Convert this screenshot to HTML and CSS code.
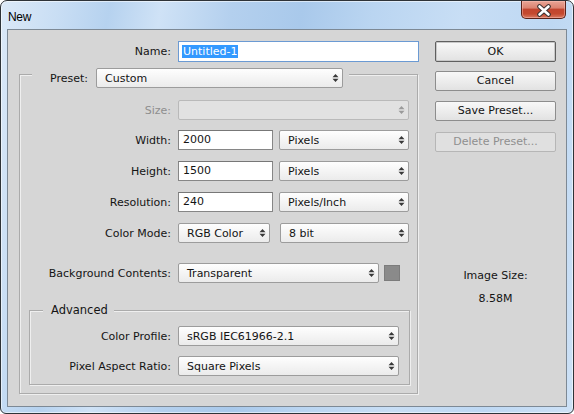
FILE: index.html
```html
<!DOCTYPE html>
<html>
<head>
<meta charset="utf-8">
<title>New</title>
<link rel="stylesheet" href="styles.css">
</head>
<body>
<div class="window">
  <div class="titlebar">
    <span class="title">New</span>
    <div class="close">
      <svg width="16" height="13" viewBox="0 0 16 13">
        <path d="M3.5 2.5 L12.5 10.5 M12.5 2.5 L3.5 10.5" stroke="#3a3030" stroke-width="4.6" stroke-linecap="round"/>
        <path d="M3.5 2.5 L12.5 10.5 M12.5 2.5 L3.5 10.5" stroke="#ffffff" stroke-width="2.6" stroke-linecap="round"/>
      </svg>
    </div>
  </div>
  <div class="client">
    <div class="main">
      <div class="row name-row">
        <label class="lbl lbl-name">Name:</label>
        <div class="input input-name"><span class="sel">Untitled-1</span></div>
      </div>

      <div class="group">
        <div class="legend preset-legend">
          <label class="lbl-preset">Preset:</label>
          <div class="select w-preset"><span class="val">Custom</span><svg class="arr" width="7" height="10" viewBox="0 0 7 10"><path d="M3.5 1 L6.5 4.2 H0.5Z M0.5 5.8 H6.5 L3.5 9Z"/></svg></div>
        </div>

        <div class="row r-size">
          <label class="lbl lbl-g disabled">Size:</label>
          <div class="select w-full disabled-sel"><span class="val"></span><svg class="arr" width="7" height="10" viewBox="0 0 7 10"><path d="M3.5 1 L6.5 4.2 H0.5Z M0.5 5.8 H6.5 L3.5 9Z"/></svg></div>
        </div>

        <div class="row r-width">
          <label class="lbl lbl-g">Width:</label>
          <div class="input w-num">2000</div>
          <div class="select w-unit"><span class="val">Pixels</span><svg class="arr" width="7" height="10" viewBox="0 0 7 10"><path d="M3.5 1 L6.5 4.2 H0.5Z M0.5 5.8 H6.5 L3.5 9Z"/></svg></div>
        </div>

        <div class="row r-next">
          <label class="lbl lbl-g">Height:</label>
          <div class="input w-num">1500</div>
          <div class="select w-unit"><span class="val">Pixels</span><svg class="arr" width="7" height="10" viewBox="0 0 7 10"><path d="M3.5 1 L6.5 4.2 H0.5Z M0.5 5.8 H6.5 L3.5 9Z"/></svg></div>
        </div>

        <div class="row r-next">
          <label class="lbl lbl-g">Resolution:</label>
          <div class="input w-num">240</div>
          <div class="select w-unit"><span class="val">Pixels/Inch</span><svg class="arr" width="7" height="10" viewBox="0 0 7 10"><path d="M3.5 1 L6.5 4.2 H0.5Z M0.5 5.8 H6.5 L3.5 9Z"/></svg></div>
        </div>

        <div class="row r-next">
          <label class="lbl lbl-g">Color Mode:</label>
          <div class="select w-mode"><span class="val">RGB Color</span><svg class="arr" width="7" height="10" viewBox="0 0 7 10"><path d="M3.5 1 L6.5 4.2 H0.5Z M0.5 5.8 H6.5 L3.5 9Z"/></svg></div>
          <div class="select w-bit"><span class="val">8 bit</span><svg class="arr" width="7" height="10" viewBox="0 0 7 10"><path d="M3.5 1 L6.5 4.2 H0.5Z M0.5 5.8 H6.5 L3.5 9Z"/></svg></div>
        </div>

        <div class="row r-bg">
          <label class="lbl lbl-g">Background Contents:</label>
          <div class="select w-bg"><span class="val">Transparent</span><svg class="arr" width="7" height="10" viewBox="0 0 7 10"><path d="M3.5 1 L6.5 4.2 H0.5Z M0.5 5.8 H6.5 L3.5 9Z"/></svg></div>
          <div class="swatch"></div>
        </div>

        <div class="group adv">
          <div class="legend adv-legend">Advanced</div>
          <div class="row r-prof">
            <label class="lbl lbl-a">Color Profile:</label>
            <div class="select w-adv"><span class="val">sRGB IEC61966-2.1</span><svg class="arr" width="7" height="10" viewBox="0 0 7 10"><path d="M3.5 1 L6.5 4.2 H0.5Z M0.5 5.8 H6.5 L3.5 9Z"/></svg></div>
          </div>
          <div class="row r-par">
            <label class="lbl lbl-a">Pixel Aspect Ratio:</label>
            <div class="select w-adv"><span class="val">Square Pixels</span><svg class="arr" width="7" height="10" viewBox="0 0 7 10"><path d="M3.5 1 L6.5 4.2 H0.5Z M0.5 5.8 H6.5 L3.5 9Z"/></svg></div>
          </div>
        </div>
      </div>
    </div>

    <div class="side">
      <div class="btn btn-ok">OK</div>
      <div class="btn btn-cancel">Cancel</div>
      <div class="btn btn-save">Save Preset...</div>
      <div class="btn btn-del disabled-btn">Delete Preset...</div>
      <div class="imgsize-label">Image Size:</div>
      <div class="imgsize-val">8.58M</div>
    </div>
  </div>
</div>
</body>
</html>
```

FILE: styles.css
```css
* { box-sizing: border-box; }

html, body {
  margin: 0;
  padding: 0;
  background: #ffffff;
}

body {
  width: 574px;
  height: 414px;
  overflow: hidden;
  font-family: "DejaVu Sans", sans-serif;
  font-size: 11px;
  color: #141414;
}

.window {
  width: 574px;
  height: 414px;
  border: 1px solid #2e3338;
  border-radius: 7px 7px 6px 6px;
  padding: 0 6px 6px 6px;
  display: flex;
  flex-direction: column;
  background: linear-gradient(100deg, #dbe9f8 0%, #c9def4 9%, #b6d2ef 17%, #cfe2f6 25%, #b4d0ee 36%, #a9c9eb 47%, #bad5f1 58%, #c8def5 72%, #bed8f3 86%, #cde1f6 100%);
  box-shadow: inset 0 0 0 1px rgba(255, 255, 255, 0.55);
}

.titlebar {
  height: 28px;
  display: flex;
  justify-content: space-between;
  align-items: flex-start;
  padding-left: 1px;
}

.title {
  font-family: "Liberation Sans", sans-serif;
  font-size: 12px;
  color: #000;
  margin-top: 9px;
  letter-spacing: -0.3px;
}

.close {
  width: 45px;
  height: 18px;
  margin-right: 1px;
  border: 1px solid #5a2219;
  border-top: none;
  border-radius: 0 0 5px 5px;
  background: linear-gradient(#e9a596 0%, #dc8472 40%, #c2452f 50%, #c4492f 75%, #d97a62 100%);
  box-shadow: inset 0 0 0 1px rgba(255, 200, 190, 0.45);
  display: flex;
  align-items: center;
  justify-content: center;
}

.close svg { display: block; margin-top: 1px; }

.client {
  flex: 1;
  background: #d6d6d6;
  border: 1px solid #7d8995;
  display: flex;
}

.main {
  width: 419px;
  display: flex;
  flex-direction: column;
}

.row {
  display: flex;
  align-items: center;
  height: 20px;
}

.lbl {
  text-align: right;
  flex: none;
  white-space: nowrap;
}

.name-row {
  margin-top: 11px;
  height: 21px;
}

.lbl-name { width: 163px; margin-right: 7px; }

.input {
  height: 20px;
  background: #ffffff;
  border: 1px solid #868686;
  border-top-color: #777;
  padding-left: 4px;
  line-height: 18px;
  white-space: nowrap;
}

.input-name {
  width: 241px;
  height: 21px;
  border-color: #6b9ad3;
  padding-left: 3px;
  line-height: 19px;
}

.sel {
  background: #3399ff;
  color: #ffffff;
  display: inline-block;
  line-height: 13px;
  padding: 0 1px;
  vertical-align: middle;
  margin-top: -2px;
}

.group {
  margin-top: 12px;
  margin-left: 11px;
  width: 399px;
  border: 1px solid #ababab;
  box-shadow: 1px 1px 0 #efefef, inset 1px 1px 0 #efefef;
  display: flex;
  flex-direction: column;
  padding-bottom: 8px;
}

.legend {
  background: #d6d6d6;
  align-self: flex-start;
  display: flex;
  align-items: center;
}

.preset-legend {
  margin-top: -7px;
  margin-left: 12px;
  padding: 0 6px 0 18px;
  height: 20px;
}

.lbl-preset { width: 46px; flex: none; }

.select {
  height: 20px;
  border: 1px solid #9c9c9c;
  border-radius: 2px;
  background: linear-gradient(#fefefe, #ebebeb);
  display: flex;
  align-items: center;
  padding-left: 8px;
  padding-right: 3px;
  flex: none;
  white-space: nowrap;
}

.select .val { flex: 1; }

.arr { display: block; fill: #3a3a3a; flex: none; }

.w-preset { width: 247px; }

.r-size { margin-top: 12px; }
.r-width { margin-top: 10px; }
.r-next { margin-top: 11px; }
.r-bg { margin-top: 20px; }

.lbl-g { width: 151px; margin-right: 7px; }

.disabled { color: #8e8e8e; }

.w-full { width: 231px; }

.disabled-sel {
  background: #e1e1e1;
  border-color: #b9b9b9;
}

.disabled-sel .arr { fill: #9a9a9a; }

.w-num { width: 95px; margin-right: 6px; }
.w-unit { width: 130px; }
.w-mode { width: 92px; margin-right: 10px; }
.w-bit { width: 129px; }
.w-bg { width: 201px; margin-right: 5px; }

.swatch {
  width: 16px;
  height: 16px;
  background: #8a8a8a;
  border: 1px solid #7c7c7c;
  flex: none;
}

.adv {
  margin-top: 27px;
  margin-left: 9px;
  width: 381px;
}

.adv-legend {
  margin-top: -8px;
  margin-left: 13px;
  padding: 0 6px 0 8px;
  height: 14px;
  line-height: 14px;
  font-size: 11.5px;
}

.lbl-a { width: 141px; margin-right: 7px; }
.w-adv { width: 221px; }

.r-prof { margin-top: 9px; }
.r-par { margin-top: 10px; }

.side {
  width: 121px;
  margin-left: 8px;
  display: flex;
  flex-direction: column;
}

.btn {
  height: 20px;
  border: 1px solid #8d8d8d;
  border-radius: 2px;
  background: linear-gradient(#f8f8f8, #e2e2e2);
  text-align: center;
  line-height: 18px;
  white-space: nowrap;
}

.btn-ok {
  margin-top: 11px;
  height: 21px;
  line-height: 19px;
  border-color: #5f5f5f;
  box-shadow: inset 0 0 0 1px #c8c8c8;
}

.btn-cancel { margin-top: 9px; }
.btn-save { margin-top: 10px; }
.btn-del { margin-top: 11px; }

.disabled-btn {
  color: #8f8f8f;
  background: #e0e0e0;
  border-color: #b6b6b6;
}

.imgsize-label {
  margin-top: 117px;
  text-align: center;
  line-height: 14px;
}

.imgsize-val {
  margin-top: 9px;
  text-align: center;
  line-height: 14px;
}
```
